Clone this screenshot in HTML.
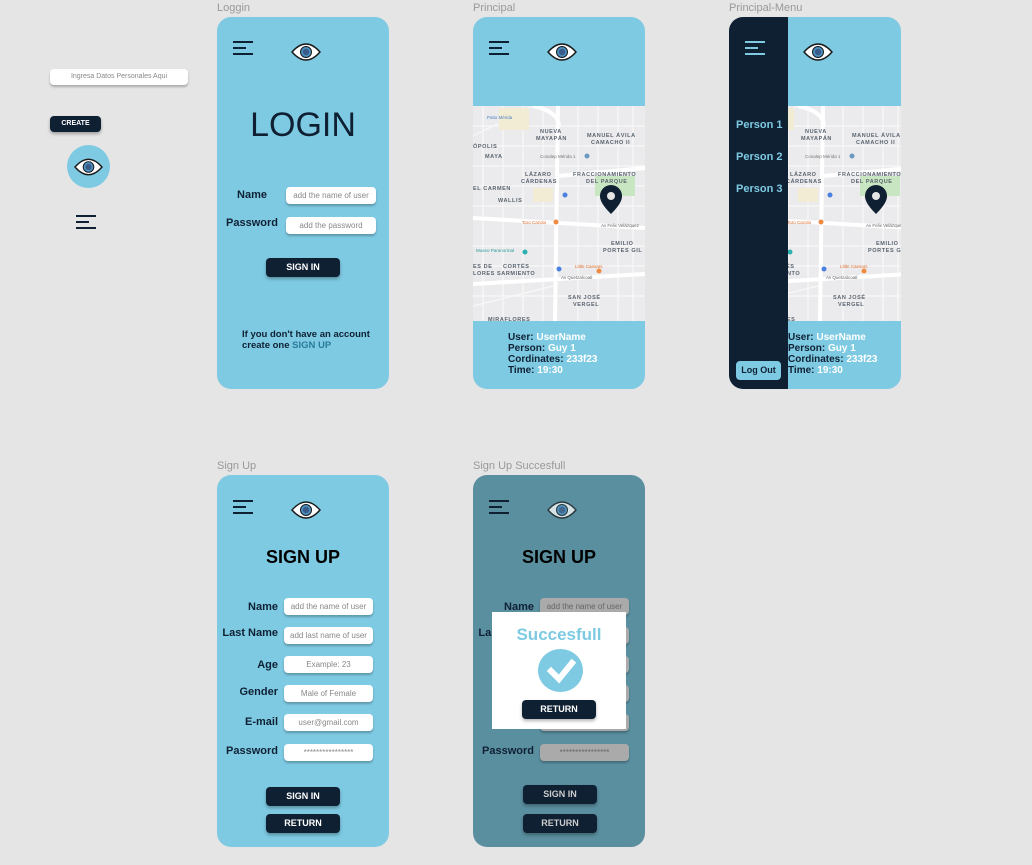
<!DOCTYPE html>
<html><head><meta charset="utf-8"><style>
*{margin:0;padding:0;box-sizing:border-box}
body{width:1032px;height:865px;background:#e5e5e5;position:relative;overflow:hidden;font-family:"Liberation Sans",sans-serif;color:#0f2033}
.a{position:absolute}
.cap{position:absolute;font-size:11px;color:#999}
.fr{position:absolute;width:172px;height:372px;background:#7ecae3;border-radius:14px;overflow:hidden}
.in{position:absolute;height:17px;background:#fff;border-radius:4px;box-shadow:0 2px 2px rgba(0,0,0,.25);font-size:8px;color:#888;text-align:center;line-height:17px;white-space:nowrap;overflow:hidden}
.lb{position:absolute;font-size:11px;font-weight:bold;text-align:right;white-space:nowrap}
.bt{position:absolute;height:19px;background:#0f2033;color:#fff;border-radius:4px;font-size:9px;font-weight:bold;text-align:center;line-height:19px;box-shadow:0 2px 3px rgba(0,0,0,.3)}
.info{position:absolute;font-size:10px;font-weight:bold;line-height:11px;color:#0f2033;white-space:nowrap}
.info span{color:#fff}
.pl{position:absolute;font-size:11px;font-weight:bold;color:#7ecae3}
</style></head><body>

<svg width="0" height="0" style="position:absolute">
<defs>
<symbol id="ham" viewBox="0 0 20 14"><g stroke="#0f2033" stroke-width="2"><line x1="0" y1="1" x2="20" y2="1"/><line x1="0" y1="7" x2="13" y2="7"/><line x1="0" y1="13" x2="20" y2="13"/></g></symbol>
<symbol id="eye" viewBox="0 0 30 20"><path d="M1 10 Q15 -6 29 10 Q15 26 1 10Z" fill="#fff" stroke="#1a1a1a" stroke-width="1.4"/><circle cx="15" cy="10" r="5.5" fill="#4a90c0" stroke="#1a1a1a" stroke-width="1"/><circle cx="15" cy="10" r="3.2" fill="#3a5a88"/></symbol>
<symbol id="map" viewBox="0 0 172 215">
<rect width="172" height="215" fill="#ebebed"/>
<g stroke="#f8f8f8" stroke-width="1.2" fill="none">
<path d="M0 20H172M0 40H172M0 60H172M0 80H172M0 100H172M0 140H172M0 160H172M0 190H172M10 0V215M30 0V215M50 0V215M70 0V215M105 0V215M125 0V215M145 0V215M160 0V215M0 30L60 0M0 200L80 180"/>
</g>
<rect x="122" y="70" width="40" height="20" fill="#c8e6c2"/>
<rect x="26" y="2" width="30" height="22" fill="#f3ecd5"/>
<rect x="60" y="82" width="20" height="14" fill="#f3ecd5"/>
<g stroke="#fff" stroke-width="4" fill="none">
<path d="M85 0L82 215"/><path d="M0 112L172 122"/><path d="M0 178L172 168"/><path d="M85 70L172 62"/><path d="M60 0Q85 5 86 20"/>
</g>
<g font-family="Liberation Sans" font-size="5.5" font-weight="bold" fill="#5a6470" letter-spacing=".6">
<text x="67" y="27">NUEVA</text><text x="63" y="34">MAYAPÁN</text>
<text x="114" y="31">MANUEL ÁVILA</text><text x="118" y="38">CAMACHO II</text>
<text x="0" y="42">ÓPOLIS</text><text x="12" y="52">MAYA</text>
<text x="52" y="70">LÁZARO</text><text x="48" y="77">CÁRDENAS</text>
<text x="100" y="70">FRACCIONAMIENTO</text><text x="113" y="77">DEL PARQUE</text>
<text x="0" y="84">EL CARMEN</text><text x="25" y="96">WALLIS</text>
<text x="138" y="139">EMILIO</text><text x="130" y="146">PORTES GIL</text>
<text x="0" y="162">ES DE</text><text x="30" y="162">CORTÉS</text>
<text x="0" y="169">LORES</text><text x="24" y="169">SARMIENTO</text>
<text x="95" y="193">SAN JOSÉ</text><text x="100" y="200">VERGEL</text>
<text x="15" y="215">MIRAFLORES</text>
</g>
<g font-family="Liberation Sans" font-size="4.5">
<text x="14" y="13" fill="#4a80c0">Patio Mérida</text>
<text x="67" y="52" fill="#777">Conalep Mérida 1</text>
<text x="49" y="118" fill="#e07030">Toro Cazola</text>
<text x="3" y="146" fill="#2a9a9a">Museo Paranormal</text>
<text x="102" y="162" fill="#e07030">Little Caesars</text>
<text x="128" y="121" fill="#666">Av Felix Velázquez</text>
<text x="88" y="173" fill="#666">Av Quetzalcoatl</text>
</g>
<circle cx="83" cy="116" r="2.5" fill="#f08a40"/><circle cx="126" cy="165" r="2.5" fill="#f08a40"/><circle cx="92" cy="89" r="2.5" fill="#4a80e0"/><circle cx="86" cy="163" r="2.5" fill="#4a80e0"/><circle cx="52" cy="146" r="2.5" fill="#2ab0b0"/><circle cx="114" cy="50" r="2.5" fill="#6a9ac0"/>
<path d="M138 108 C128 98 127 93 127 90 A11 11 0 0 1 149 90 C149 93 148 98 138 108Z" fill="#0f2033"/><circle cx="138" cy="90" r="4" fill="#e5e5e5"/>
</symbol>
</defs></svg>

<div class="in" style="left:50px;top:69px;width:138px;height:16px;line-height:16px;font-size:7px">Ingresa Datos Personales Aqui</div>
<div class="bt" style="left:50px;top:116px;width:51px;height:16px;line-height:16px;font-size:7px">CREATE</div>
<div class="a" style="left:67px;top:145px;width:43px;height:43px;border-radius:50%;background:#7ecae3"></div>
<svg class="a" style="left:74px;top:157px" width="29" height="20"><use href="#eye"/></svg>
<svg class="a" style="left:76px;top:215px" width="20" height="14"><use href="#ham"/></svg>

<div class="cap" style="left:217px;top:2px">Loggin</div>
<div class="fr" style="left:217px;top:17px">
 <svg class="a" style="left:16px;top:24px" width="20" height="14"><use href="#ham"/></svg>
 <svg class="a" style="left:74px;top:25px" width="30" height="20"><use href="#eye"/></svg>
 <div class="a" style="left:0;width:172px;top:89px;text-align:center;font-size:34px">LOGIN</div>
 <div class="lb" style="right:122px;top:172px">Name</div>
 <div class="in" style="left:69px;top:170px;width:90px">add the name of user</div>
 <div class="lb" style="right:111px;top:200px">Password</div>
 <div class="in" style="left:69px;top:200px;width:90px">add the password</div>
 <div class="bt" style="left:49px;top:241px;width:74px">SIGN IN</div>
 <div class="info" style="left:25px;top:312px;font-size:9.5px;line-height:11px">If you don't have an account<br>create one <b style="color:#2a7a9a">SIGN UP</b></div>
</div>

<div class="cap" style="left:473px;top:2px">Principal</div>
<div class="fr" style="left:473px;top:17px">
 <svg class="a" style="left:16px;top:24px" width="20" height="14"><use href="#ham"/></svg>
 <svg class="a" style="left:74px;top:25px" width="30" height="20"><use href="#eye"/></svg>
 <svg class="a" style="left:0;top:89px" width="172" height="215"><use href="#map"/></svg>
 <div class="info" style="left:35px;top:315px">User: <span>UserName</span><br>Person: <span>Guy 1</span><br>Cordinates: <span>233f23</span><br>Time: <span>19:30</span></div>
</div>

<div class="cap" style="left:729px;top:2px">Principal-Menu</div>
<div class="fr" style="left:729px;top:17px">
 <svg class="a" style="left:9px;top:89px" width="172" height="215"><use href="#map"/></svg>
 <svg class="a" style="left:74px;top:25px" width="30" height="20"><use href="#eye"/></svg>
 <div class="info" style="left:59px;top:315px">User: <span>UserName</span><br>Person: <span>Guy 1</span><br>Cordinates: <span>233f23</span><br>Time: <span>19:30</span></div>
 <div class="a" style="left:0;top:0;width:59px;height:372px;background:#0f2033"></div>
 <svg class="a" style="left:16px;top:24px" width="20" height="14"><g stroke="#7ecae3" stroke-width="2"><line x1="0" y1="1" x2="20" y2="1"/><line x1="0" y1="7" x2="13" y2="7"/><line x1="0" y1="13" x2="20" y2="13"/></g></svg>
 <div class="pl" style="left:7px;top:102px">Person 1</div>
 <div class="pl" style="left:7px;top:134px">Person 2</div>
 <div class="pl" style="left:7px;top:166px">Person 3</div>
 <div class="a" style="left:7px;top:344px;width:45px;height:19px;background:#7ecae3;border-radius:4px;font-size:9px;font-weight:bold;text-align:center;line-height:19px">Log Out</div>
</div>

<div class="cap" style="left:217px;top:460px">Sign Up</div>
<div class="fr" style="left:217px;top:475px">
 <svg class="a" style="left:16px;top:25px" width="20" height="14"><use href="#ham"/></svg>
 <svg class="a" style="left:74px;top:25px" width="30" height="20"><use href="#eye"/></svg>
 <div class="a" style="left:0;width:172px;top:72px;text-align:center;font-size:18px;font-weight:bold;color:#000">SIGN UP</div>
 <div class="lb" style="right:111px;top:126px">Name</div><div class="in" style="left:67px;top:123px;width:89px">add the name of user</div>
 <div class="lb" style="right:111px;top:152px">Last Name</div><div class="in" style="left:67px;top:152px;width:89px">add last name of user</div>
 <div class="lb" style="right:111px;top:184px">Age</div><div class="in" style="left:67px;top:181px;width:89px">Example: 23</div>
 <div class="lb" style="right:111px;top:211px">Gender</div><div class="in" style="left:67px;top:210px;width:89px">Male of Female</div>
 <div class="lb" style="right:111px;top:241px">E-mail</div><div class="in" style="left:67px;top:239px;width:89px">user@gmail.com</div>
 <div class="lb" style="right:111px;top:270px">Password</div><div class="in" style="left:67px;top:269px;width:89px">****************</div>
 <div class="bt" style="left:49px;top:312px;width:74px">SIGN IN</div>
 <div class="bt" style="left:49px;top:339px;width:74px">RETURN</div>
</div>

<div class="cap" style="left:473px;top:460px">Sign Up Succesfull</div>
<div class="fr" style="left:473px;top:475px;background:#5a8fa0">
 <svg class="a" style="left:16px;top:25px" width="20" height="14"><use href="#ham"/></svg>
 <svg class="a" style="left:74px;top:25px;opacity:.75" width="30" height="20"><use href="#eye"/></svg>
 <div class="a" style="left:0;width:172px;top:72px;text-align:center;font-size:18px;font-weight:bold;color:#000">SIGN UP</div>
 <div class="lb" style="right:111px;top:126px">Name</div><div class="in" style="left:67px;top:123px;width:89px;background:#aaa;color:#666">add the name of user</div>
 <div class="lb" style="right:111px;top:152px">Last Name</div><div class="in" style="left:67px;top:152px;width:89px;background:#aaa"></div>
 <div class="in" style="left:67px;top:181px;width:89px;background:#aaa"></div>
 <div class="in" style="left:67px;top:210px;width:89px;background:#aaa"></div>
 <div class="in" style="left:67px;top:239px;width:89px;background:#aaa"></div>
 <div class="lb" style="right:111px;top:270px">Password</div><div class="in" style="left:67px;top:269px;width:89px;background:#aaa;color:#666">****************</div>
 <div class="bt" style="left:50px;top:310px;width:74px;color:#ccc">SIGN IN</div>
 <div class="bt" style="left:50px;top:339px;width:74px;color:#ccc">RETURN</div>
 <div class="a" style="left:19px;top:137px;width:134px;height:117px;background:#fff">
  <div class="a" style="left:0;width:134px;top:13px;text-align:center;font-size:17px;font-weight:bold;color:#7ecae3">Succesfull</div>
  <div class="a" style="left:46px;top:37px;width:45px;height:43px;border-radius:50%;background:#7ecae3"></div>
  <svg class="a" style="left:46px;top:37px" width="45" height="43"><path d="M13 22 L21 30 L34 14" stroke="#fff" stroke-width="6" fill="none" stroke-linecap="square"/></svg>
  <div class="bt" style="left:30px;top:88px;width:74px">RETURN</div>
 </div>
</div>
</body></html>
